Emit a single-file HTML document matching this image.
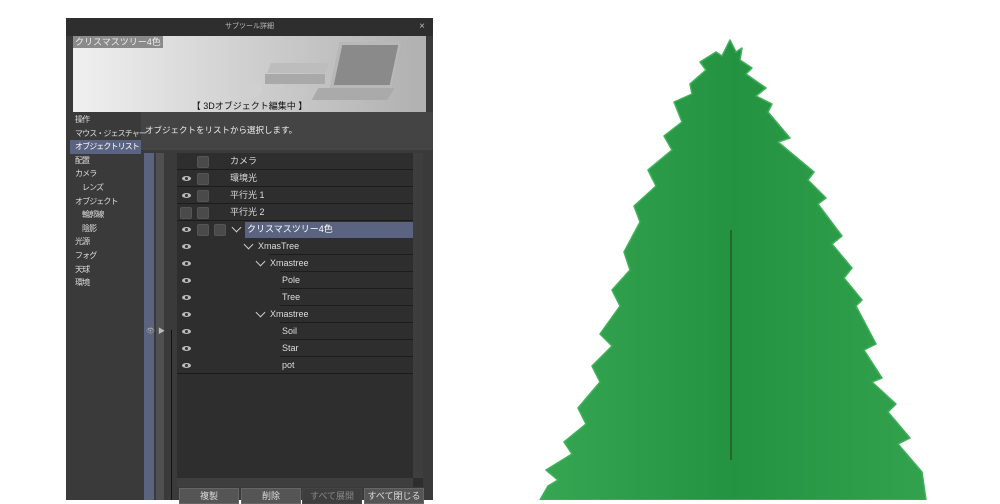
<!DOCTYPE html>
<html><head><meta charset="utf-8"><style>
body{margin:0;width:1000px;height:500px;background:#fff;position:relative;overflow:hidden;font-family:"Liberation Sans","Noto Sans CJK JP",sans-serif;font-size:9px;color:#ddd}
.a{position:absolute}
.menu div{height:13.6px;line-height:13.6px;padding-left:5px;font-size:8px;white-space:nowrap;letter-spacing:-0.9px}
.row{position:absolute;left:177px;width:236px;height:17px}
.sep{position:absolute;bottom:0;height:1px;background:#1c1c1c;right:0}
.eye{position:absolute;left:5px;top:6px;width:9px;height:5px;border-radius:50%;background:#bbb}
.eye:after{content:"";position:absolute;left:3px;top:1px;width:3px;height:3px;border-radius:50%;background:#333}
.cb{position:absolute;top:3px;width:10px;height:10px;background:#4a4a4a;border:1px solid #555;border-radius:2px}
.chev{position:absolute;top:3px;width:6px;height:6px;border-right:1px solid #ccc;border-bottom:1px solid #ccc;transform:rotate(45deg)}
.nm{position:absolute;top:0;line-height:17px;font-size:9px;color:#ddd}
.btn{position:absolute;top:488px;height:14px;background:#555;border:1px solid #666;text-align:center;line-height:14px;font-size:9px}
</style></head><body>
<svg class="a" style="left:0;top:0" width="1000" height="500">
<defs><linearGradient id="g" x1="0" x2="1"><stop offset="0" stop-color="#36a653"/><stop offset="0.5" stop-color="#249341"/><stop offset="1" stop-color="#33a24e"/></linearGradient></defs>
<g stroke="#40b05a" stroke-width="1.5" stroke-linejoin="round">
<polygon fill="url(#g)" points="730,40 736,52 742,48 740,60 752,68 746,74 766,88 756,96 772,104 768,112 790,138 778,142 802,162 814,172 808,180 826,198 818,204 842,236 832,244 852,268 844,278 862,300 856,306 876,344 864,350 882,378 872,382 896,404 888,412 910,438 898,444 922,472 926,500 540,500 548,486 558,480 546,470 572,454 564,442 586,424 578,408 600,382 592,366 612,346 600,334 620,306 612,290 630,270 624,252 640,222 634,206 656,186 648,170 672,150 664,136 682,122 674,102 692,94 690,84 706,70 700,62 716,52 722,56"/>
</g>
<line x1="731" y1="230" x2="731" y2="460" stroke="#2a4a20" stroke-width="2" opacity=".6"/>
</svg>
<div class="a" style="left:66px;top:410px;width:4px;height:40px;background:#3a8a3a"></div>
<div class="a" style="left:66px;top:18px;width:367px;height:482px;background:#3a3a3a"></div>
<div class="a" style="left:66px;top:18px;width:367px;height:18px;background:#2e2e2e;text-align:center;line-height:18px;font-size:7px;color:#bbb">サブツール詳細<span style="position:absolute;right:8px;font-size:10px">×</span></div>
<div class="a" style="left:73px;top:36px;width:353px;height:76px;background:linear-gradient(90deg,#f0f0f0,#cfcfcf 50%,#b0b0b0);overflow:hidden">
 <div class="a" style="left:0;top:0;background:#8a8a8a;color:#eee;padding:0 2px;line-height:12px;font-size:9px">クリスマスツリー4色</div>
 <div class="a" style="left:196px;top:27px;width:58px;height:10px;background:#bdbdbd;transform:skewX(-20deg)"></div>
 <div class="a" style="left:192px;top:38px;width:60px;height:10px;background:#a9a9a9"></div>
 <div class="a" style="left:262px;top:6px;width:56px;height:40px;background:#8a8a8a;border:3px solid #b8b8b8;transform:skewX(-12deg)"></div>
 <div class="a" style="left:242px;top:52px;width:76px;height:12px;background:#aaa;transform:skewX(-30deg)"></div>
 <div class="a" style="left:168px;top:48px;width:20px;height:14px;background:#d0d0d0;border-radius:0 0 8px 8px"></div>
 <div class="a" style="left:0;width:353px;top:64px;text-align:center;color:#111;font-size:9px;line-height:12px">【 3Dオブジェクト編集中 】</div>
</div>
<div class="a" style="left:141px;top:112px;width:292px;height:38px;background:#444"></div>
<div class="a" style="left:145px;top:124px;font-size:8.5px;color:#eee">オブジェクトをリストから選択します。</div>
<div class="a menu" style="left:70px;top:113px;width:71px">
<div>操作</div><div>マウス・ジェスチャー</div><div style="background:#5a6480;color:#fff">オブジェクトリスト</div><div>配置</div><div>カメラ</div><div style="padding-left:12px">レンズ</div><div>オブジェクト</div><div style="padding-left:12px">輪郭線</div><div style="padding-left:12px">陰影</div><div>光源</div><div>フォグ</div><div>天球</div><div>環境</div>
</div>
<div class="a" style="left:144px;top:153px;width:10px;height:347px;background:#5a6480"></div>
<div class="a" style="left:156px;top:153px;width:8px;height:347px;background:#505050"></div>
<div class="a" style="left:146px;top:327px;font-size:7px;color:#aaa">👁</div>
<div class="a" style="left:158px;top:326px;font-size:7px;color:#bbb">▶</div>
<div class="a" style="left:171px;top:330px;width:1px;height:170px;background:#111"></div>
<div class="a" style="left:177px;top:153px;width:246px;height:334px;background:#2e2e2e"></div>
<div class="a" style="left:413px;top:153px;width:10px;height:325px;background:#3e3e3e"></div>
<div class="a" style="left:177px;top:478px;width:236px;height:9px;background:#3e3e3e"></div>

<div class="row" style="top:153px"><div class="cb" style="left:20px"></div><div class="nm" style="left:53px">カメラ</div><div class="sep" style="left:0"></div></div>
<div class="row" style="top:170px"><div class="eye"></div><div class="cb" style="left:20px"></div><div class="nm" style="left:53px">環境光</div><div class="sep" style="left:0"></div></div>
<div class="row" style="top:187px"><div class="eye"></div><div class="cb" style="left:20px"></div><div class="nm" style="left:53px">平行光 1</div><div class="sep" style="left:0"></div></div>
<div class="row" style="top:204px"><div class="cb" style="left:3px"></div><div class="cb" style="left:20px"></div><div class="nm" style="left:53px">平行光 2</div><div class="sep" style="left:0"></div></div>
<div class="row" style="top:221px"><div class="eye"></div><div class="cb" style="left:20px"></div><div class="cb" style="left:37px"></div><div class="chev" style="left:56px"></div><div class="a" style="left:68px;top:1px;width:168px;height:16px;background:#5a6480"></div><div class="nm" style="left:70px;color:#fff">クリスマスツリー4色</div></div>
<div class="row" style="top:238px"><div class="eye"></div><div class="chev" style="left:68px"></div><div class="nm" style="left:81px">XmasTree</div><div class="sep" style="left:92px"></div></div>
<div class="row" style="top:255px"><div class="eye"></div><div class="chev" style="left:80px"></div><div class="nm" style="left:93px">Xmastree</div><div class="sep" style="left:103px"></div></div>
<div class="row" style="top:272px"><div class="eye"></div><div class="nm" style="left:105px">Pole</div><div class="sep" style="left:103px"></div></div>
<div class="row" style="top:289px"><div class="eye"></div><div class="nm" style="left:105px">Tree</div><div class="sep" style="left:103px"></div></div>
<div class="row" style="top:306px"><div class="eye"></div><div class="chev" style="left:80px"></div><div class="nm" style="left:93px">Xmastree</div><div class="sep" style="left:103px"></div></div>
<div class="row" style="top:323px"><div class="eye"></div><div class="nm" style="left:105px">Soil</div><div class="sep" style="left:103px"></div></div>
<div class="row" style="top:340px"><div class="eye"></div><div class="nm" style="left:105px">Star</div><div class="sep" style="left:103px"></div></div>
<div class="row" style="top:357px"><div class="eye"></div><div class="nm" style="left:105px">pot</div><div class="sep" style="left:0;background:#1a1a1a"></div></div>

<div class="btn" style="left:179px;width:58px">複製</div>
<div class="btn" style="left:241px;width:58px">削除</div>
<div class="btn" style="left:302px;width:58px;background:#3e3e3e;color:#888;border-color:#444">すべて展開</div>
<div class="btn" style="left:364px;width:58px">すべて閉じる</div>
</body></html>
